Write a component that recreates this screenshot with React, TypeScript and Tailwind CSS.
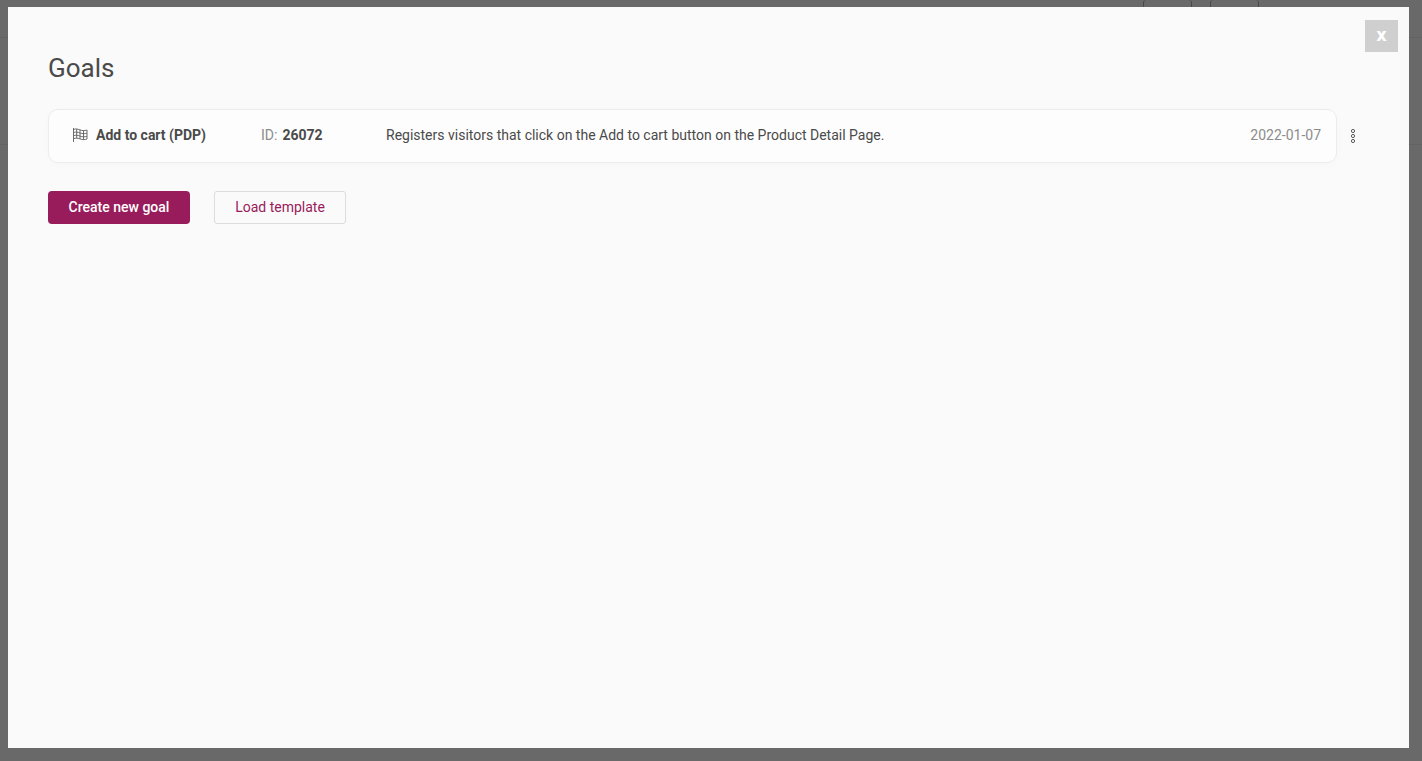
import React from 'react';

interface Goal {
  id: number;
  name: string;
  description: string;
  date: string;
}

const goals: Goal[] = [
  {
    id: 26072,
    name: 'Add to cart (PDP)',
    description: 'Registers visitors that click on the Add to cart button on the Product Detail Page.',
    date: '2022-01-07',
  },
];

const FlagIcon: React.FC = () => (
  <svg
    className="h-4 w-4 shrink-0"
    viewBox="0 0 16 16"
    fill="none"
    stroke="#5c5c5c"
    strokeWidth="0.9"
    aria-hidden="true"
  >
    <path d="M1.5 1v14" />
    <path d="M1.5 2.5c2.5-1 4-.5 6.5.4s4.5 1 7 .1v9c-2.5.9-4.5.7-7-.1s-4-1.2-6.5-.2" />
    <path d="M1.5 5.6c2.5-1 4-.5 6.5.4s4.5 1 7 .1M1.5 8.7c2.5-1 4-.5 6.5.4s4.5 1 7 .1" />
    <path d="M4.7 2v9.2M8 2.9v9M11.5 3.6v8.9" />
  </svg>
);

const DotsIcon: React.FC = () => (
  <svg
    className="h-4 w-2"
    viewBox="0 0 8 16"
    fill="none"
    stroke="#5c5c5c"
    strokeWidth="1"
    aria-hidden="true"
  >
    <circle cx="4" cy="3" r="1.6" />
    <circle cx="4" cy="8" r="1.6" />
    <circle cx="4" cy="13" r="1.6" />
  </svg>
);

const GoalRow: React.FC<{ goal: Goal }> = ({ goal }) => (
  <li className="flex items-center">
    <div className="flex h-[54px] flex-1 items-center rounded-[10px] border border-[#ececec] bg-[#fdfdfd] pr-[15px] pb-[2px] pl-[23px] shadow-[0_2px_8px_rgba(0,0,0,0.02)]">
      <div className="flex w-[189px] items-center gap-2 font-bold">
        <FlagIcon />
        <span>{goal.name}</span>
      </div>
      <div className="flex w-[125px] gap-[5px]">
        <span className="text-[#8c8c8c]">ID:</span>
        <span className="font-bold">{goal.id}</span>
      </div>
      <p className="flex-1">{goal.description}</p>
      <time className="text-[#8c8c8c]">{goal.date}</time>
    </div>
    <button type="button" aria-label="Goal options" className="flex w-8 justify-center">
      <DotsIcon />
    </button>
  </li>
);

// Dimmed page that stays visible round the dialog
const PageBehind: React.FC = () => (
  <div className="min-h-screen bg-[#696969]">
    <div className="flex h-[38px] justify-end gap-[18px] border-b border-[#626262] pr-[163px]">
      <div className="h-8 w-[49px] rounded-[3px] border-x border-[#484848]"></div>
      <div className="h-8 w-[49px] rounded-[3px] border-x border-[#484848]"></div>
    </div>
    <div className="h-[107px] border-b border-[#626262]"></div>
  </div>
);

export default function App() {
  return (
    <div className="font-['Roboto',sans-serif] text-sm text-[#4a4a4a]">
      <PageBehind />
      <div
        role="dialog"
        aria-labelledby="goals-title"
        className="fixed top-[7px] right-[13px] bottom-[13px] left-2 bg-[#fafafa] pt-11 pr-10 pl-10"
      >
        <button
          type="button"
          aria-label="Close"
          className="absolute top-[13px] right-[11px] h-8 w-[33px] bg-[#cfcfcf] font-['Open_Sans',sans-serif] text-sm font-extrabold text-white"
        >
          X
        </button>
        <h1 id="goals-title" className="text-[26px] leading-[34px]">
          Goals
        </h1>
        <ul className="mt-6">
          {goals.map((goal) => (
            <GoalRow key={goal.id} goal={goal} />
          ))}
        </ul>
        <div className="mt-7 flex gap-6">
          <button
            type="button"
            className="h-[33px] w-[142px] rounded-[4px] bg-[#981b5b] pb-[2px] font-medium text-white"
          >
            Create new goal
          </button>
          <button
            type="button"
            className="h-[33px] w-[132px] rounded-[3px] border border-[#dcdcdc] pb-[2px] text-[#981b5b]"
          >
            Load template
          </button>
        </div>
      </div>
    </div>
  );
}
